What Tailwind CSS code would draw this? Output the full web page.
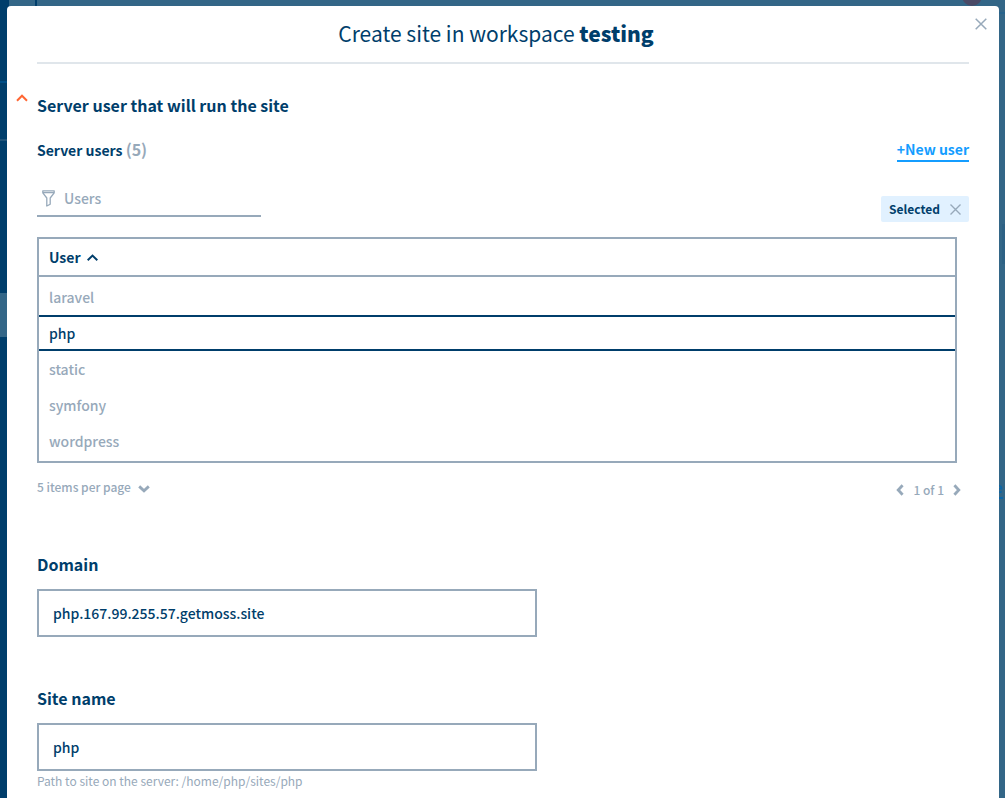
<!DOCTYPE html>
<html lang="en">
<head>
<meta charset="utf-8">
<meta name="viewport" content="width=device-width, initial-scale=1">
<title>Create site</title>
<script src="https://cdn.jsdelivr.net/npm/@tailwindcss/browser@4"></script>
</head>
<body class="min-h-screen overflow-x-hidden bg-[#336687] font-['Noto_Sans_CJK_SC',sans-serif] text-sm text-[#003e6b]">
<!-- Dimmed page behind the dialog -->
<div class="fixed inset-0 -z-10 overflow-hidden" aria-hidden="true">
  <div class="absolute inset-y-0 left-0 w-[9px] bg-[#003e6b]"></div>
  <div class="absolute left-[35px] top-0 h-[6px] w-[2px] bg-[#003e6b]"></div>
  <div class="absolute left-0 top-[81px] h-[2px] w-[7px] bg-[#004e86]"></div>
  <div class="absolute left-0 top-[139px] h-[2px] w-[7px] bg-[#1f5379]"></div>
  <div class="absolute left-0 top-[293px] h-[44px] w-[9px] bg-[#336687]"></div>
  <div class="absolute right-[23px] -top-[14px] size-5 rounded-full bg-[#4a4a66]"></div>
  <div class="absolute right-0 top-[12px] h-[2px] w-[12px] bg-[#27638c]"></div>
  <div class="absolute right-0 top-[224px] h-[40px] w-[3px] bg-[#2d6184]"></div>
  <div class="absolute right-[2px] top-[497px] h-[2px] w-[5px] bg-[#0a66a8]"></div>
  <div class="absolute right-[2px] top-[479px] text-sm leading-4 font-bold text-[#0a66a8]">e</div>
</div>

<main role="dialog" aria-labelledby="title" class="relative mt-[6px] mr-[6px] ml-[7px] min-h-[calc(100vh-6px)] rounded-t bg-white px-[30px] pb-2">
  <button type="button" aria-label="Close" class="absolute top-3 right-3 cursor-pointer text-[#97a9ba]">
    <svg class="size-3" viewBox="0 0 12 12" fill="none" stroke="currentColor" stroke-width="1.5"><path d="M.7.7l10.600 10.600M11.300.7L.7 11.300"/></svg>
  </button>
  <header class="flex h-[58px] items-center justify-center border-b-2 border-[#e0e6eb] pr-3.5 pb-0.5">
    <h1 id="title" class="text-[21px] leading-8">Create site in workspace <strong class="font-black">testing</strong></h1>
  </header>

  <section class="pt-[29px]">
    <div class="relative">
      <svg class="absolute top-px -left-[21px] h-[8px] w-[12px]" viewBox="0 0 12 8" fill="none" stroke="#ff6633" stroke-width="2"><path d="M1 6.700L6 1.700l5 5"/></svg>
      <h2 class="text-base leading-6 font-bold">Server user that will run the site</h2>
    </div>

    <div class="mt-[22px] flex h-[23px] items-start justify-between">
      <h3 class="leading-5 font-bold">Server users <span class="text-base leading-5 text-[#97a9ba]">(5)</span></h3>
      <a href="#" class="border-b-2 border-[#149dff] pb-px leading-5 font-bold text-[#149dff]">+New user</a>
    </div>

    <div class="mt-5 flex h-10 items-start justify-between">
      <label class="flex h-[35px] w-56 items-center border-b-2 border-[#97a9ba] pl-[5px]">
        <svg class="h-[17px] w-[13px] shrink-0" viewBox="0 0 13 17" fill="none" stroke="#97a9ba" stroke-width="1.300" stroke-linejoin="round"><path d="M.8.8h11.400v2L8.200 8v6.200L4.800 16V8L.8 2.800zM1.200 2.700h10.600"/></svg>
        <input type="text" aria-label="Users" placeholder="Users" class="ml-[9px] min-w-0 flex-1 pb-0.5 leading-5 font-medium placeholder-[#97a9ba] outline-none">
      </label>
      <div class="mt-[14px] flex h-[26px] items-center gap-2.5 rounded-xs bg-[#e1f1ff] px-2">
        <span class="text-xs leading-4 font-bold">Selected</span>
        <button type="button" aria-label="Remove Selected" class="text-[#97a9ba]">
          <svg class="size-[11px]" viewBox="0 0 11 11" fill="none" stroke="currentColor" stroke-width="1.400"><path d="M.5.5l10 10M10.500.5l-10 10"/></svg>
        </button>
      </div>
    </div>

    <div class="mt-[15px] mr-3 border-2 border-[#97a9ba]">
      <table class="w-full border-separate border-spacing-0 text-left leading-5">
        <thead>
          <tr><th scope="col" class="h-[38px] border-b-2 border-[#97a9ba] px-2.5 py-0">
            <button type="button" class="flex items-center gap-1.5 font-bold">User
              <svg class="h-[7px] w-[11px]" viewBox="0 0 11 7" fill="none" stroke="currentColor" stroke-width="2"><path d="M.7 6.200L5.500 1.600l4.800 4.600"/></svg>
            </button>
          </th></tr>
        </thead>
        <tbody class="font-medium text-[#97a9ba]">
          <tr><td class="h-[38px] px-2.5 pt-0.5 pb-0">laravel</td></tr>
          <tr class="text-[#003e6b]"><td class="h-9 border-y-2 border-[#003e6b] px-2.5 py-0">php</td></tr>
          <tr><td class="h-9 px-2.5 py-0">static</td></tr>
          <tr><td class="h-9 px-2.5 py-0">symfony</td></tr>
          <tr><td class="h-[38px] px-2.5 pt-0 pb-0.5">wordpress</td></tr>
        </tbody>
      </table>
    </div>

    <div class="mt-[14px] mr-2 flex items-start justify-between text-xs leading-5 font-medium text-[#97a9ba]">
      <label class="flex items-center gap-[7px]">
        <select aria-label="Items per page" class="appearance-none leading-5"><option>5 items per page</option></select>
        <svg class="mt-1 h-[8px] w-[12px]" viewBox="0 0 12 8" fill="none" stroke="currentColor" stroke-width="2.800"><path d="M1.200 1.400L6 5.800l4.800-4.400"/></svg>
      </label>
      <nav aria-label="Pages" class="mt-[3px] flex items-center gap-[9px]">
        <button type="button" aria-label="Previous page"><svg class="h-[12px] w-[8px]" viewBox="0 0 8 12" fill="none" stroke="currentColor" stroke-width="2.800"><path d="M6.600 1.200L2.200 6l4.400 4.800"/></svg></button>
        <span>1 of 1</span>
        <button type="button" aria-label="Next page"><svg class="h-[12px] w-[8px]" viewBox="0 0 8 12" fill="none" stroke="currentColor" stroke-width="2.800"><path d="M1.400 1.200L5.800 6l-4.400 4.800"/></svg></button>
      </nav>
    </div>
  </section>

  <form>
    <div class="mt-[52px]">
      <label for="domain" class="block text-base leading-6 font-bold">Domain</label>
      <input id="domain" type="text" value="php.167.99.255.57.getmoss.site" class="mt-[13px] block h-12 w-full max-w-[500px] border-2 border-[#97a9ba] px-3.5 font-medium outline-none">
    </div>
    <div class="mt-[49px]">
      <label for="site" class="block text-base leading-6 font-bold">Site name</label>
      <input id="site" type="text" value="php" aria-describedby="hint" class="mt-[13px] block h-12 w-full max-w-[500px] border-2 border-[#97a9ba] px-3.5 font-medium outline-none">
      <p id="hint" class="text-xs leading-5 text-[#97a9ba]">Path to site on the server: /home/php/sites/php</p>
    </div>
  </form>
</main>
</body>
</html>
